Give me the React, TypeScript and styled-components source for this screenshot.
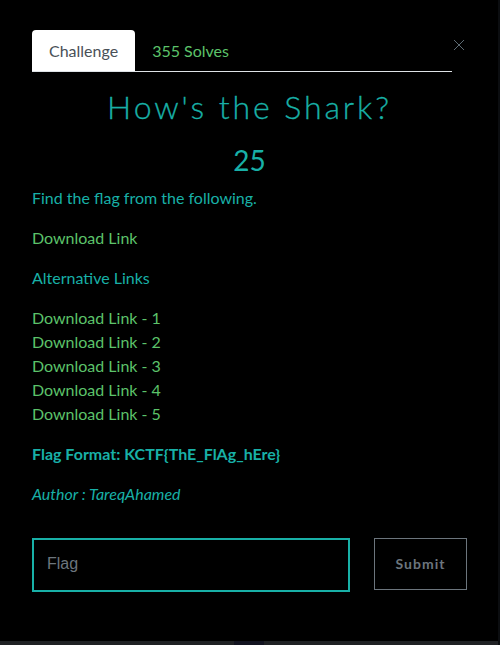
import React from "react";
import styled, { createGlobalStyle } from "styled-components";

const TEAL = "#18b0a7";
const GREEN = "#5cc36a";

const Global = createGlobalStyle`
  html, body { margin: 0; padding: 0; background: #000; }
  body { font-family: "Lato", "Open Sans", sans-serif; }
  * { box-sizing: border-box; }
`;

const Page = styled.div`
  width: 500px;
  height: 645px;
  display: flex;
  flex-direction: column;
  background: #000;
  border-right: 2px solid #0b0d10;
  overflow: hidden;
`;

const Modal = styled.div`
  flex: 1;
  padding: 30px 0 0 32px;
  width: 467px;
`;

const Header = styled.div`
  display: flex;
  align-items: flex-start;
`;

const TabList = styled.div`
  flex: 0 0 420px;
  display: flex;
  border-bottom: 1px solid #dee2e6;
`;

const Tab = styled.div<{ $active?: boolean }>`
  height: 41px;
  padding: 0 17px;
  display: flex;
  align-items: center;
  font-size: 16px;
  border-radius: 4px 4px 0 0;
  background: ${(p) => (p.$active ? "#fff" : "transparent")};
  color: ${(p) => (p.$active ? "#495057" : GREEN)};
`;

const Close = styled.button`
  margin: 9px 0 0 1px;
  padding: 0;
  border: none;
  background: none;
  width: 12px;
  height: 12px;
  display: flex;
  line-height: 0;
`;

const Title = styled.h3`
  margin: 16px 0 0;
  text-align: center;
  font-family: "Lato", sans-serif;
  font-weight: 300;
  font-size: 32px;
  letter-spacing: 2.9px;
  line-height: 38px;
  color: ${TEAL};
  -webkit-text-stroke: 0.3px ${TEAL};
`;

const Points = styled.h4`
  margin: 17px 0 0;
  text-align: center;
  font-weight: 400;
  font-size: 28px;
  line-height: 34px;
  color: ${TEAL};
`;

const Body = styled.div`
  margin-top: 9px;
  font-size: 16px;
  line-height: 24px;
`;

const P = styled.p<{ $color?: string; $bold?: boolean; $italic?: boolean }>`
  margin: 0 0 16px;
  color: ${(p) => p.$color || TEAL};
  font-weight: ${(p) => (p.$bold ? 700 : 400)};
  font-style: ${(p) => (p.$italic ? "italic" : "normal")};
`;

const Link = styled.a`
  color: ${GREEN};
  text-decoration: none;
`;

const Form = styled.form`
  margin-top: 32px;
  display: flex;
  align-items: flex-start;
  gap: 24px;
`;

const Input = styled.input`
  width: 318px;
  height: 54px;
  border: 2px solid ${TEAL};
  background: #000;
  padding: 0 13px 3px;
  font-family: "Liberation Sans", Arial, sans-serif;
  font-size: 16px;
  color: #ccc;
  outline: none;
  &::placeholder { color: #6c757d; }
`;

const Submit = styled.button`
  width: 93px;
  height: 52px;
  background: #000;
  border: 1px solid #6c757d;
  color: #6c757d;
  font-family: "Lato", sans-serif;
  font-weight: 700;
  font-size: 14px;
  letter-spacing: 1px;
  padding: 0 0 2px;
`;

const Scrollbar = styled.div`
  height: 4px;
  background: #1f2124;
  display: flex;
  padding-left: 234px;
`;

const Thumb = styled.div`
  width: 30px;
  background: #121320;
`;

export default function App() {
  return (
    <Page>
      <Global />
      <Modal>
        <Header>
          <TabList>
            <Tab $active>Challenge</Tab>
            <Tab>355 Solves</Tab>
          </TabList>
          <Close aria-label="Close">
            <svg width="12" height="12" viewBox="0 0 12 12">
              <path d="M1 1 L11 11 M11 1 L1 11" stroke="#5d6b74" strokeWidth="1" fill="none" />
            </svg>
          </Close>
        </Header>
        <Title>How's the Shark?</Title>
        <Points>25</Points>
        <Body>
          <P>Find the flag from the following.</P>
          <P><Link href="#">Download Link</Link></P>
          <P>Alternative Links</P>
          <P>
            <Link href="#">Download Link - 1</Link><br />
            <Link href="#">Download Link - 2</Link><br />
            <Link href="#">Download Link - 3</Link><br />
            <Link href="#">Download Link - 4</Link><br />
            <Link href="#">Download Link - 5</Link>
          </P>
          <P $bold>Flag Format: KCTF{"{"}ThE_FlAg_hEre{"}"}</P>
          <P $italic>Author : TareqAhamed</P>
        </Body>
        <Form onSubmit={(e) => e.preventDefault()}>
          <Input placeholder="Flag" />
          <Submit type="submit">Submit</Submit>
        </Form>
      </Modal>
      <Scrollbar>
        <Thumb />
      </Scrollbar>
    </Page>
  );
}
